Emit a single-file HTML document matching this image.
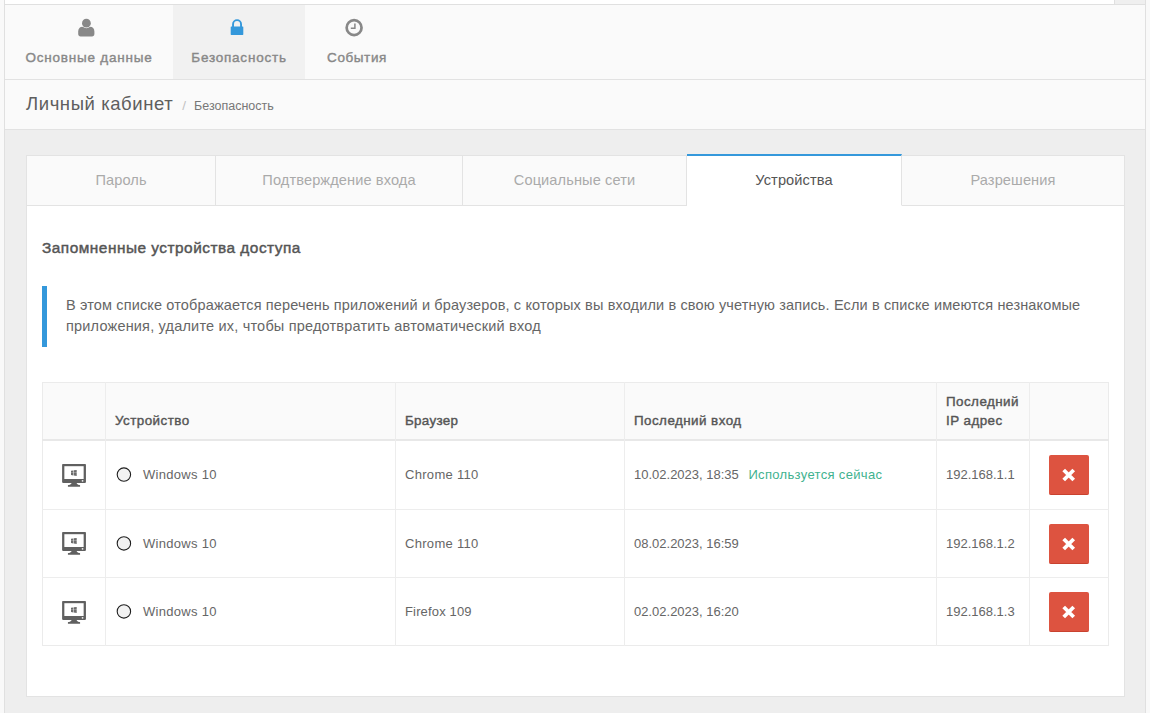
<!DOCTYPE html>
<html lang="ru">
<head>
<meta charset="utf-8">
<title>Личный кабинет — Безопасность</title>
<style>
*{box-sizing:border-box;margin:0;padding:0}
html,body{width:1150px;height:713px;overflow:hidden}
body{background:#f9f9f9;font-family:"Liberation Sans",sans-serif;color:#555;font-size:13px;position:relative}
.abs{position:absolute}
#frame{left:4px;top:0;width:1142px;height:713px;border-left:1px solid #e0e0e0;border-right:1px solid #e0e0e0;background:#eee}
#topwhite{left:5px;top:0;width:1109px;height:4px;background:#fff}
#topgrey{left:1114px;top:0;width:31px;height:4px;background:#efefef;border-left:1px solid #e0e0e0}
#topline{left:5px;top:4px;width:1140px;height:1px;background:#e0e0e0}
#nav{left:5px;top:5px;width:1140px;height:74px;background:#fafafa}
#navline{left:5px;top:79px;width:1140px;height:1px;background:#e2e2e2}
.nitem{position:absolute;top:0;height:74px;text-align:center;font-weight:normal;-webkit-text-stroke:0.4px #888;font-size:13.5px;color:#888;white-space:nowrap}
.nitem span{position:absolute;left:0;right:0;top:45px;line-height:16px;letter-spacing:0.78px}
.nitem svg{position:absolute}
#n2{background:#f1f1f1}
#head{left:5px;top:80px;width:1140px;height:49px;background:#fafafa}
#headline{left:5px;top:129px;width:1140px;height:1px;background:#e2e2e2}
#h1{left:26px;top:93px;font-size:18.5px;line-height:22px;letter-spacing:0.58px;color:#5e5e5e;white-space:nowrap}
#crumbsep{left:182.3px;top:99px;font-size:13.5px;line-height:14px;color:#c2c2c2}
#crumb{left:194px;top:99px;font-size:12.5px;line-height:14px;color:#777;white-space:nowrap}
#panel{left:26px;top:155px;width:1099px;height:542px;background:#fff;border:1px solid #e3e3e3}
.tab{position:absolute;top:155px;height:51px;background:#fafafa;border:1px solid #e3e3e3;border-left:none;text-align:center;font-size:14.6px;line-height:49px;color:#aaa;letter-spacing:0.1px;white-space:nowrap}
#t1{border-left:1px solid #e3e3e3}
#t4{background:#fff;color:#555;border-bottom-color:#fff;top:154px;height:52px;border-top:2px solid #3498db;line-height:49px}
#title{left:42px;top:239px;font-size:15.4px;line-height:18px;font-weight:normal;-webkit-text-stroke:0.45px #555;color:#555;white-space:nowrap;letter-spacing:0.5px}
#notebar{left:42px;top:286px;width:5px;height:61px;background:#3498db}
.note{position:absolute;left:66px;font-size:14.5px;line-height:18px;color:#666;white-space:nowrap;letter-spacing:0.14px}
#tbl{left:42px;top:382px;width:1067px;height:264px;background:#fff;border:1px solid #ebebeb}
#thead{left:43px;top:383px;width:1065px;height:57px;background:#fafafa}
.hl{position:absolute;left:42px;width:1067px;height:1px;background:#ededed}
.vl{position:absolute;top:382px;width:1px;height:264px;background:#ededed}
.th{position:absolute;font-size:13.4px;line-height:16px;font-weight:normal;-webkit-text-stroke:0.4px #555;color:#555;letter-spacing:0.45px;white-space:nowrap}
.td{position:absolute;font-size:13px;line-height:16px;color:#666;white-space:nowrap}
.green{color:#3fb28f}
.radio{position:absolute;left:116px;width:16px;height:16px;border-radius:50%;border:1.3px solid #222;background:#efefef}
.btn{position:absolute;left:1049px;width:40px;height:40px;background:#dd5340;border-radius:2px;border-bottom:1px solid #c9422f}
.btn svg{position:absolute;left:13px;top:13px}
.mon{position:absolute;left:62px}
</style>
</head>
<body>
<div class="abs" id="frame"></div>
<div class="abs" id="topwhite"></div>
<div class="abs" id="topgrey"></div>
<div class="abs" id="topline"></div>
<div class="abs" id="nav">
  <div class="nitem" id="n1" style="left:0;width:168px"><span>Основные данные</span></div>
  <div class="nitem" id="n2" style="left:168px;width:132px"><span>Безопасность</span></div>
  <div class="nitem" id="n3" style="left:301px;width:102px"><span style="letter-spacing:0.6px">События</span></div>
</div>
<svg class="abs" id="ic1" style="left:78px;top:18px" width="17" height="20" viewBox="0 0 17 20"><g transform="translate(0,0.5)"><path fill="#888" d="M0.2 15.5V13C0.2 10 2 8.2 4.5 8.2H12.1C14.6 8.2 16.4 10 16.4 13V15.5C16.4 17 15.4 17.9 14 17.9H2.6C1.2 17.9 0.2 17 0.2 15.5Z"/><circle cx="8.4" cy="4.7" r="5.1" fill="#fafafa"/><circle cx="8.4" cy="4.7" r="4.4" fill="#888"/></g></svg>
<svg class="abs" id="ic2" style="left:230px;top:19px" width="14" height="16" viewBox="0 0 14 16"><rect x="0.7" y="7.5" width="12.6" height="8.4" rx="0.6" fill="#3498db"/><path d="M3.05 8V5.15a4 4 0 0 1 8 0V8" fill="none" stroke="#3498db" stroke-width="1.9"/></svg>
<svg class="abs" id="ic3" style="left:345px;top:18px" width="19" height="19" viewBox="0 0 19 19"><circle cx="9.1" cy="9.65" r="7.45" fill="none" stroke="#888" stroke-width="2.7"/><path d="M9.9 5.6V10.3H5.8" fill="none" stroke="#888" stroke-width="1.5"/></svg>
<div class="abs" id="navline"></div>
<div class="abs" id="head"></div>
<div class="abs" id="headline"></div>
<div class="abs" id="h1">Личный кабинет</div>
<div class="abs" id="crumbsep">/</div>
<div class="abs" id="crumb">Безопасность</div>

<div class="abs" id="panel"></div>
<div class="tab" id="t1" style="left:26px;width:190px">Пароль</div>
<div class="tab" id="t2" style="left:216px;width:247px">Подтверждение входа</div>
<div class="tab" id="t3" style="left:463px;width:224px">Социальные сети</div>
<div class="tab" id="t4" style="left:687px;width:215px">Устройства</div>
<div class="tab" id="t5" style="left:902px;width:223px">Разрешения</div>

<div class="abs" id="title">Запомненные устройства доступа</div>
<div class="abs" id="notebar"></div>
<div class="note" id="note1" style="top:296px">В этом списке отображается перечень приложений и браузеров, с которых вы входили в свою учетную запись. Если в списке имеются незнакомые</div>
<div class="note" id="note2" style="top:317px;letter-spacing:0.19px">приложения, удалите их, чтобы предотвратить автоматический вход</div>

<div class="abs" id="tbl"></div>
<div class="abs" id="thead"></div>
<div class="hl" style="top:439px;background:#e8e8e8;height:2px"></div>
<div class="hl" style="top:509px"></div>
<div class="hl" style="top:577px"></div>
<div class="vl" style="left:105px"></div>
<div class="vl" style="left:395px"></div>
<div class="vl" style="left:624px"></div>
<div class="vl" style="left:936px"></div>
<div class="vl" style="left:1029px"></div>
<div class="th" style="left:115px;top:413px">Устройство</div>
<div class="th" style="left:405px;top:413px;letter-spacing:0.3px">Браузер</div>
<div class="th" style="left:634px;top:413px">Последний вход</div>
<div class="th" style="left:946px;top:392px;line-height:19px">Последний<br>IP адрес</div>
<svg class="mon" style="top:464px" width="24" height="23" viewBox="0 0 24 23"><rect x="0.1" y="0" width="23.85" height="18.9" rx="0.8" fill="#606060"/><rect x="2.35" y="2.2" width="19.3" height="12.8" fill="#fff"/><circle cx="20.56" cy="16.8" r="0.9" fill="#f0f0f0"/><path fill="#606060" d="M9.7 18.8H14.5C14.8 20.4 16.5 21.2 18.1 21.2H5.9C7.5 21.2 9.4 20.4 9.7 18.8Z"/><rect x="5.9" y="21.1" width="12.2" height="1.75" rx="0.5" fill="#606060"/><path fill="#6c6c6c" d="M9 6.7L11.3 6.4V8.7H9ZM11.8 6.3L14.7 5.9V8.7H11.8ZM9 9.1H11.3V11.4L9 11.1ZM11.8 9.1H14.7V11.9L11.8 11.5Z"/></svg>
<svg class="abs" style="left:115px;top:465px" width="18" height="18" viewBox="0 0 18 18"><circle cx="8.9" cy="9.6" r="6.7" fill="#f2f2f2" stroke="#1e1e1e" stroke-width="1.1"/></svg>
<div class="td" style="left:143px;top:467px;letter-spacing:0.3px">Windows 10</div>
<div class="td" style="left:405px;top:467px;letter-spacing:0.3px">Chrome 110</div>
<div class="td" style="left:634px;top:467px">10.02.2023, 18:35 <span class="green" style="margin-left:6px;letter-spacing:0.33px">Используется сейчас</span></div>
<div class="td" style="left:946px;top:467px">192.168.1.1</div>
<div class="btn" style="top:455px"><svg width="14" height="14" viewBox="0 0 14 14"><path transform="translate(0.2,0.5)" d="M1.5 1.5L11.5 11.5M11.5 1.5L1.5 11.5" stroke="#fff" stroke-width="3.8" stroke-linecap="butt"/></svg></div>
<svg class="mon" style="top:532px" width="24" height="23" viewBox="0 0 24 23"><rect x="0.1" y="0" width="23.85" height="18.9" rx="0.8" fill="#606060"/><rect x="2.35" y="2.2" width="19.3" height="12.8" fill="#fff"/><circle cx="20.56" cy="16.8" r="0.9" fill="#f0f0f0"/><path fill="#606060" d="M9.7 18.8H14.5C14.8 20.4 16.5 21.2 18.1 21.2H5.9C7.5 21.2 9.4 20.4 9.7 18.8Z"/><rect x="5.9" y="21.1" width="12.2" height="1.75" rx="0.5" fill="#606060"/><path fill="#6c6c6c" d="M9 6.7L11.3 6.4V8.7H9ZM11.8 6.3L14.7 5.9V8.7H11.8ZM9 9.1H11.3V11.4L9 11.1ZM11.8 9.1H14.7V11.9L11.8 11.5Z"/></svg>
<svg class="abs" style="left:115px;top:534px" width="18" height="18" viewBox="0 0 18 18"><circle cx="8.9" cy="9.4" r="6.7" fill="#f2f2f2" stroke="#1e1e1e" stroke-width="1.1"/></svg>
<div class="td" style="left:143px;top:536px;letter-spacing:0.3px">Windows 10</div>
<div class="td" style="left:405px;top:536px;letter-spacing:0.3px">Chrome 110</div>
<div class="td" style="left:634px;top:536px">08.02.2023, 16:59</div>
<div class="td" style="left:946px;top:536px">192.168.1.2</div>
<div class="btn" style="top:524px"><svg width="14" height="14" viewBox="0 0 14 14"><path transform="translate(0.2,0.5)" d="M1.5 1.5L11.5 11.5M11.5 1.5L1.5 11.5" stroke="#fff" stroke-width="3.8" stroke-linecap="butt"/></svg></div>
<svg class="mon" style="top:601px" width="24" height="23" viewBox="0 0 24 23"><rect x="0.1" y="0" width="23.85" height="18.9" rx="0.8" fill="#606060"/><rect x="2.35" y="2.2" width="19.3" height="12.8" fill="#fff"/><circle cx="20.56" cy="16.8" r="0.9" fill="#f0f0f0"/><path fill="#606060" d="M9.7 18.8H14.5C14.8 20.4 16.5 21.2 18.1 21.2H5.9C7.5 21.2 9.4 20.4 9.7 18.8Z"/><rect x="5.9" y="21.1" width="12.2" height="1.75" rx="0.5" fill="#606060"/><path fill="#6c6c6c" d="M9 6.7L11.3 6.4V8.7H9ZM11.8 6.3L14.7 5.9V8.7H11.8ZM9 9.1H11.3V11.4L9 11.1ZM11.8 9.1H14.7V11.9L11.8 11.5Z"/></svg>
<svg class="abs" style="left:115px;top:602px" width="18" height="18" viewBox="0 0 18 18"><circle cx="8.9" cy="9.4" r="6.7" fill="#f2f2f2" stroke="#1e1e1e" stroke-width="1.1"/></svg>
<div class="td" style="left:143px;top:604px;letter-spacing:0.3px">Windows 10</div>
<div class="td" style="left:405px;top:604px;letter-spacing:0.15px">Firefox 109</div>
<div class="td" style="left:634px;top:604px">02.02.2023, 16:20</div>
<div class="td" style="left:946px;top:604px">192.168.1.3</div>
<div class="btn" style="top:592px"><svg width="14" height="14" viewBox="0 0 14 14"><path transform="translate(0.2,0.5)" d="M1.5 1.5L11.5 11.5M11.5 1.5L1.5 11.5" stroke="#fff" stroke-width="3.8" stroke-linecap="butt"/></svg></div>
</body>
</html>
